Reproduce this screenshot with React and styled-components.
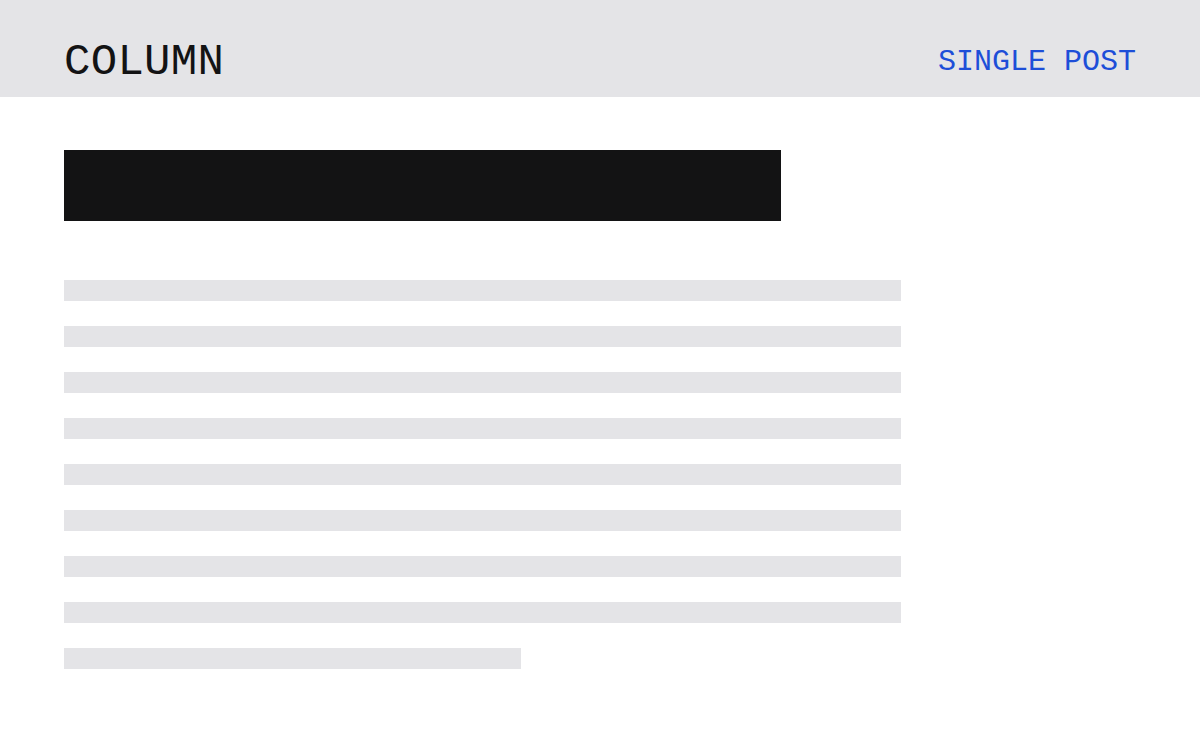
import React from "react";
import styled, { createGlobalStyle } from "styled-components";

const GlobalStyle = createGlobalStyle`
  body {
    margin: 0;
    background: #ffffff;
    font-family: "Liberation Mono", "DejaVu Sans Mono", monospace;
  }
`;

const Header = styled.header`
  height: 97px;
  box-sizing: border-box;
  padding: 26px 64px 0;
  background: #e4e4e7;
  display: flex;
  justify-content: space-between;
  align-items: center;
`;

const Logo = styled.div`
  font-size: 44px;
  letter-spacing: 0.3px;
  color: #131314;
`;

const NavLink = styled.a`
  font-size: 30px;
  color: #1d4ed8;
  text-decoration: none;
`;

const Main = styled.main`
  padding: 53px 64px 0;
  display: flex;
  flex-direction: column;
`;

const TitleBlock = styled.div`
  width: 717px;
  height: 71px;
  background: #131314;
  margin-bottom: 59px;
`;

const Lines = styled.div`
  display: flex;
  flex-direction: column;
  gap: 25px;
`;

const Line = styled.div`
  width: ${(p) => p.$width}px;
  height: 21px;
  background: #e4e4e7;
`;

const widths = [837, 837, 837, 837, 837, 837, 837, 837, 457];

function App() {
  return (
    <>
      <GlobalStyle />
      <Header>
        <Logo>COLUMN</Logo>
        <NavLink href="#">SINGLE POST</NavLink>
      </Header>
      <Main>
        <TitleBlock />
        <Lines>
          {widths.map((w, i) => (
            <Line key={i} $width={w} />
          ))}
        </Lines>
      </Main>
    </>
  );
}

export default App;
